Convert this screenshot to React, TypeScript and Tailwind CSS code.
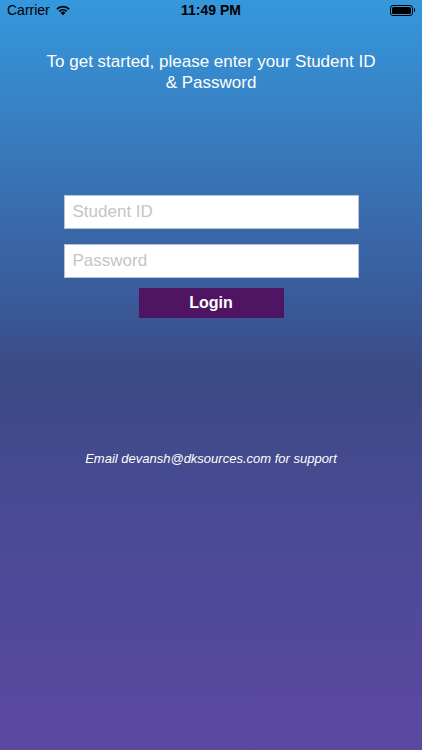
import React from "react";

const StatusBar: React.FC = () => (
  <div className="relative flex h-[20px] items-center px-[7px] text-[14px] text-black">
    <div className="flex items-center gap-[5px]">
      <span>Carrier</span>
      <svg width="16" height="12" viewBox="0 0 15 11">
        <path d="M7.5 10.5 L5.2 8 A3.3 3.3 0 0 1 9.8 8 Z" fill="black" />
        <path d="M3.4 6.2 A5.9 5.9 0 0 1 11.6 6.2 L10.4 7.4 A4.2 4.2 0 0 0 4.6 7.4 Z" fill="black" />
        <path d="M1.2 4 A9 9 0 0 1 13.8 4 L12.6 5.2 A7.3 7.3 0 0 0 2.4 5.2 Z" fill="black" />
      </svg>
    </div>
    <span className="absolute left-0 right-0 text-center font-bold">11:49 PM</span>
    <div className="ml-auto flex items-center">
      <div className="h-[11px] w-[23px] rounded-[3px] border border-black p-[1px]">
        <div className="h-full w-full rounded-[1.5px] bg-black" />
      </div>
      <div className="ml-[1px] h-[4px] w-[1.5px] rounded-r bg-black" />
    </div>
  </div>
);

export default function App() {
  return (
    <div
      className="flex h-[750px] w-full flex-col bg-[linear-gradient(to_bottom,#3598dc_0%,#3a5a9a_40%,#3b4a84_50%,#4a4a95_70%,#5c48a2_100%)]"
      style={{ fontFamily: '"Liberation Sans", Arial, sans-serif' }}
    >
      <StatusBar />
      <p className="mx-auto mt-[31px] w-[342px] text-center text-[17px] leading-[21px] text-white">
        To get started, please enter your Student ID &amp; Password
      </p>
      <div className="mt-[102px] flex flex-col items-center">
        <input
          className="h-[34px] w-[295px] border border-[#b8c4d6] bg-white px-[8px] text-[17px] text-black outline-none placeholder:text-[#c4c4c9]"
          placeholder="Student ID"
        />
        <input
          type="password"
          className="mt-[15px] h-[34px] w-[295px] border border-[#b8c4d6] bg-white px-[8px] text-[17px] text-black outline-none placeholder:text-[#c4c4c9]"
          placeholder="Password"
        />
        <button className="mt-[10px] h-[30px] w-[145px] bg-[#4f1563] text-[16px] font-bold text-white">
          Login
        </button>
      </div>
      <p className="mt-[131px] text-center text-[13px] italic text-white">
        Email devansh@dksources.com for support
      </p>
    </div>
  );
}
